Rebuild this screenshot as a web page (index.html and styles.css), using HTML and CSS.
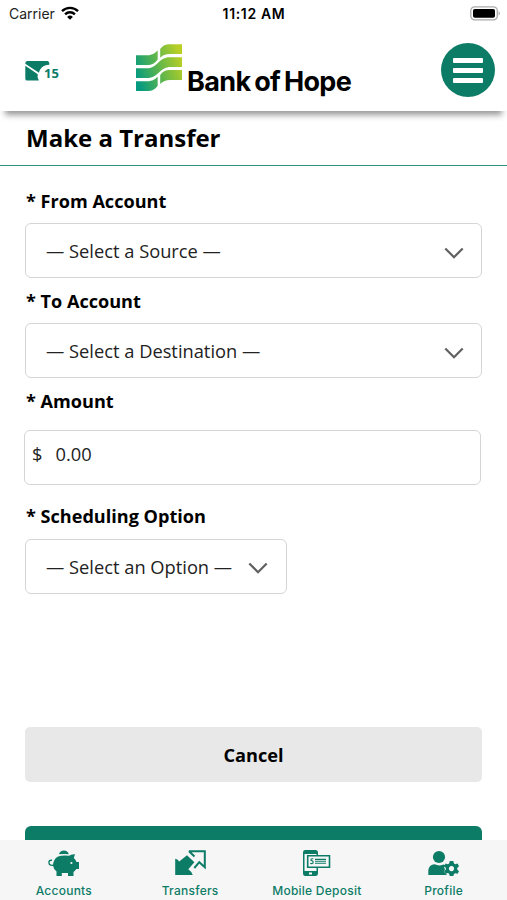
FILE: index.html
```html
<!DOCTYPE html>
<html lang="en">
<head>
<meta charset="utf-8">
<meta name="viewport" content="width=device-width, initial-scale=1">
<title>Make a Transfer</title>
<link rel="stylesheet" href="styles.css">
</head>
<body>
<div class="app">
  <div class="status">
    <div class="carrier"><span>Carrier</span>
      <svg width="18" height="14" viewBox="0 0 18 14"><g fill="none" stroke="#000" stroke-width="2.4"><path d="M1 5.1a11.5 11.5 0 0 1 16 0"/><path d="M4.1 8.3a7 7 0 0 1 9.8 0"/></g><path d="M9 13.7 6.1 10.9a4.2 4.2 0 0 1 5.8 0Z"/></svg>
    </div>
    <span class="time">11:12 AM</span>
    <svg class="battery" width="31" height="15" viewBox="0 0 31 15"><rect x=".8" y=".8" width="26.5" height="13" rx="3.8" fill="#fff" stroke="#aaa" stroke-width="1.3"/><rect x="3" y="3" width="22" height="8.8" rx="1.8"/><path d="M28.7 5.2q2.1 2 0 4.3Z" fill="#999"/></svg>
  </div>
  <header class="header">
    <a class="mail">
      <svg width="26" height="21" viewBox="0 0 26 21"><path fill="#0d7c67" d="M2 0H22.5Q24.7 .5 24.3 3.8C18 4 14.8 7.7 14 11.8L.3 2.7Q0 .5 2 0ZM.3 4.7 12.8 13.3Q11.7 16.5 13.8 19.6H2.2Q.3 19.6 .3 17.7Z"/></svg>
      <span>15</span>
    </a>
    <div class="brand">
      <svg width="46" height="48" viewBox="136 44 46 48"><defs><linearGradient id="leaf" gradientUnits="userSpaceOnUse" x1="136" y1="76" x2="182" y2="60"><stop offset="0" stop-color="#069b80"/><stop offset=".5" stop-color="#5eb64b"/><stop offset="1" stop-color="#b9cf26"/></linearGradient></defs><path fill="url(#leaf)" d="M136 55.2H147C153 55.2 155 52.5 157.7 50.4V59.4C155 63 152 65 147 65H136ZM160.2 49C163 45.2 166 44.2 170 44.2H182V54H170C166 54 163.5 54.7 160.2 57.7ZM136 68.2H147C158 68.2 158 57.2 170 57.2H182V67H171C159 67 159 78 147 78H136ZM136 81.2H147C153 81.2 155 79 157.7 76.7V85.7C155 89.5 152 91 147 91H136ZM160.2 75C163 71 166 70 170 70H182V80H170C166 80 163.5 81 160.2 84Z"/></svg>
      <span class="wordmark">Bank of Hope</span>
    </div>
    <button class="menu" aria-label="Menu"><i></i><i></i><i></i></button>
  </header>
  <h1 class="title"><span>Make a Transfer</span></h1>
  <main class="form">
    <label class="label label-from"><span>* From Account</span></label>
    <div class="field"><span>— Select a Source —</span><svg class="chevron" width="20" height="12" viewBox="0 0 20 12"><path d="m1.3 1.4 8.7 8.8 8.7-8.8"/></svg></div>
    <label class="label"><span>* To Account</span></label>
    <div class="field"><span>— Select a Destination —</span><svg class="chevron" width="20" height="12" viewBox="0 0 20 12"><path d="m1.3 1.4 8.7 8.8 8.7-8.8"/></svg></div>
    <label class="label label-amount"><span>* Amount</span></label>
    <div class="field amount"><span>$</span><span>0.00</span></div>
    <label class="label label-schedule"><span>* Scheduling Option</span></label>
    <div class="field option"><span>— Select an Option —</span><svg class="chevron" width="20" height="12" viewBox="0 0 20 12"><path d="m1.3 1.4 8.7 8.8 8.7-8.8"/></svg></div>
    <button class="cancel">Cancel</button>
    <div class="submit"></div>
  </main>
  <nav class="tabs">
    <a class="tab accounts"><svg width="32" height="28" viewBox="0 0 32 28"><path d="M11 5.2a5.1 5 0 0 1 9.8 0q-5-.6-9.8 0Z"/><path d="M10 7.6Q15 5.8 21 6.8 23.5 4.8 27 5.2L25.8 9Q28 10.8 28.5 13H31V20H28.3Q27 22 25.5 23V27H20V24H13.8V27H8.5V22.5Q5.5 20 5 16.8 5.2 10.2 10 7.6Z"/><path d="M5.5 16.2Q1 17 1 13.7.7 10.8 4 11.3" fill="none" stroke="#0d7c67" stroke-width="1.4"/><circle cx="23.4" cy="14" r="1.1" fill="#f6f6f6"/></svg><span>Accounts</span></a>
    <a class="tab"><svg width="32" height="28" viewBox="0 0 32 28"><path d="M1.2 9.8Q3.5 10 5.2 12.6L13 6.2 20.4 13.3 14.3 20.3Q17.5 22.5 18.8 26H1.2Z"/><path d="M14.8 2.3H30.8V18.2L25.3 13.2 20.3 19M15 2.3 20.5 7.5" fill="none" stroke="#0d7c67" stroke-width="2"/></svg><span>Transfers</span></a>
    <a class="tab"><svg width="32" height="28" viewBox="0 0 32 28"><path fill-rule="evenodd" d="M4 1H14.5Q17 1 17 4V24Q17 27 14.5 27H4Q2 27 2 24V4Q2 1 4 1ZM3.5 5V22H15.5V5ZM8 23.5V25.5H11V23.5Z"/><path d="M6.7 6.7H28.5V18.3H6.7Z" fill="#f6f6f6" stroke="#0d7c67" stroke-width="1.6"/><path d="M12.3 9.8Q9.6 9.3 10 11.4 12.8 12 12 14 10.8 15.1 9.2 14.2M14 10.4H25M14 12.3H25M14 14.2H25" fill="none" stroke="#0d7c67" stroke-width="1.1"/></svg><span>Mobile Deposit</span></a>
    <a class="tab profile"><svg width="32" height="28" viewBox="0 0 32 28"><circle cx="12" cy="8" r="6.1"/><path d="M1.3 26V21.5Q1.7 15.7 7.8 15.3 12 17.4 16.3 15.4L18.7 16.3Q17.8 18 17 18.6L18 20 17 22.8 20 26Z"/><path fill-rule="evenodd" d="m22.8 12 3.5 0 .7 2.5 1.2.7 2.4-.8 1.4 2.8-1.8 1.8v1.4l1.8 1.8-1.4 2.6-2.4-.6-1.2.7-.7 2.2h-3.5l-.7-2.3-1.2-.7-2.3.6-1.5-2.6 1.8-1.7V19l-1.8-1.8 1.5-2.8 2.3.8 1.2-.7ZM24.5 17a2.6 2.6 0 1 0 .01 0Z"/></svg><span>Profile</span></a>
  </nav>
</div>
</body>
</html>
```
FILE: styles.css
```css
* { box-sizing: border-box; }
body { margin: 0; background: #fff; color: #000; font-family: "Open Sans", "Noto Sans", sans-serif; }
button { border: 0; padding: 0; font: inherit; color: inherit; }
svg { display: block; flex: none; }
span { white-space: nowrap; }
.app { height: 900px; display: flex; flex-direction: column; overflow: hidden; }
.status { flex: none; height: 28px; padding: 0 6px 0 9px; display: grid; grid-template-columns: 1fr auto 1fr; align-items: center; font: 14px/28px Inter, sans-serif; }
.carrier { display: flex; align-items: center; gap: 6px; color: #222; }
.carrier svg { margin-top: -2px; }
.time { font-weight: 600; font-size: 14px; letter-spacing: .65px; margin-right: 2px; }
.battery { justify-self: end; margin-top: -2px; }
.header { flex: none; height: 83px; padding: 0 12px 0 25px; display: flex; align-items: flex-start; box-shadow: 0 9px 6px -5px #999; }
.mail { width: 111px; display: flex; padding-top: 33px; color: #0d7c67; font-size: 13px; font-weight: 700; line-height: 17px; }
.mail span { margin: 4px 0 0 -7px; }
.brand { display: flex; padding-top: 16px; gap: 5px; }
.wordmark { font: 700 27px/32px Inter, sans-serif; letter-spacing: -.65px; word-spacing: -2px; margin-top: 22px; }
.menu { width: 54px; height: 54px; margin: 15px 0 0 auto; border-radius: 50%; background: #0d7c67; display: flex; flex-direction: column; gap: 5px; align-items: center; justify-content: center; }
.menu i { width: 30px; height: 5px; border-radius: 1px; background: #fff; }
.title { flex: none; margin: 0; height: 55px; padding: 7px 26px 0; border-bottom: 1px solid #2f917e; font-size: 24px; line-height: 40px; font-weight: 700; }
.form { flex: 1; min-height: 0; padding: 0 25px; display: flex; flex-direction: column; overflow: hidden; }
.label { flex: none; height: 45px; padding: 10px 0 0 1px; font-size: 18.1px; line-height: 27px; font-weight: 700; }
.label-from { height: 57px; padding-top: 22px; }
.label-amount { height: 52px; }
.label-schedule { height: 54px; padding-top: 18px; }
.field { flex: none; height: 55px; padding: 1px 17px 0 20px; display: flex; align-items: center; justify-content: space-between; border: 1px solid #d5d5d5; border-radius: 6px; font-size: 18.3px; line-height: 26px; color: #222; }
.chevron { fill: none; stroke: #606060; stroke-width: 2.2; margin-top: 3px; }
.amount { margin: 0 1px 0 -1px; padding: 0 7px 7px; justify-content: flex-start; gap: 13px; }
.option { width: 262px; padding-top: 0; }
.option .chevron { margin-right: 1px; }
.cancel { flex: none; height: 55px; margin-top: 133px; border-radius: 5px; background: #e8e8e8; font-size: 18.2px; font-weight: 700; }
.submit { flex: none; height: 54px; margin-top: 44px; border-radius: 6px; background: #0d7c67; }
.tabs { flex: none; height: 60px; background: #f6f6f6; display: grid; grid-template-columns: repeat(4, 1fr); color: #0d7c67; }
.tab { display: flex; flex-direction: column; align-items: center; padding-top: 9px; font: 500 12px/16px Inter, sans-serif; letter-spacing: .25px; }
.tab svg { fill: #0d7c67; }
.tab span { margin-top: 6px; }
.accounts { padding-left: 1px; }
.accounts svg { margin-left: 1px; }
.profile svg { margin-right: 1px; }
```
